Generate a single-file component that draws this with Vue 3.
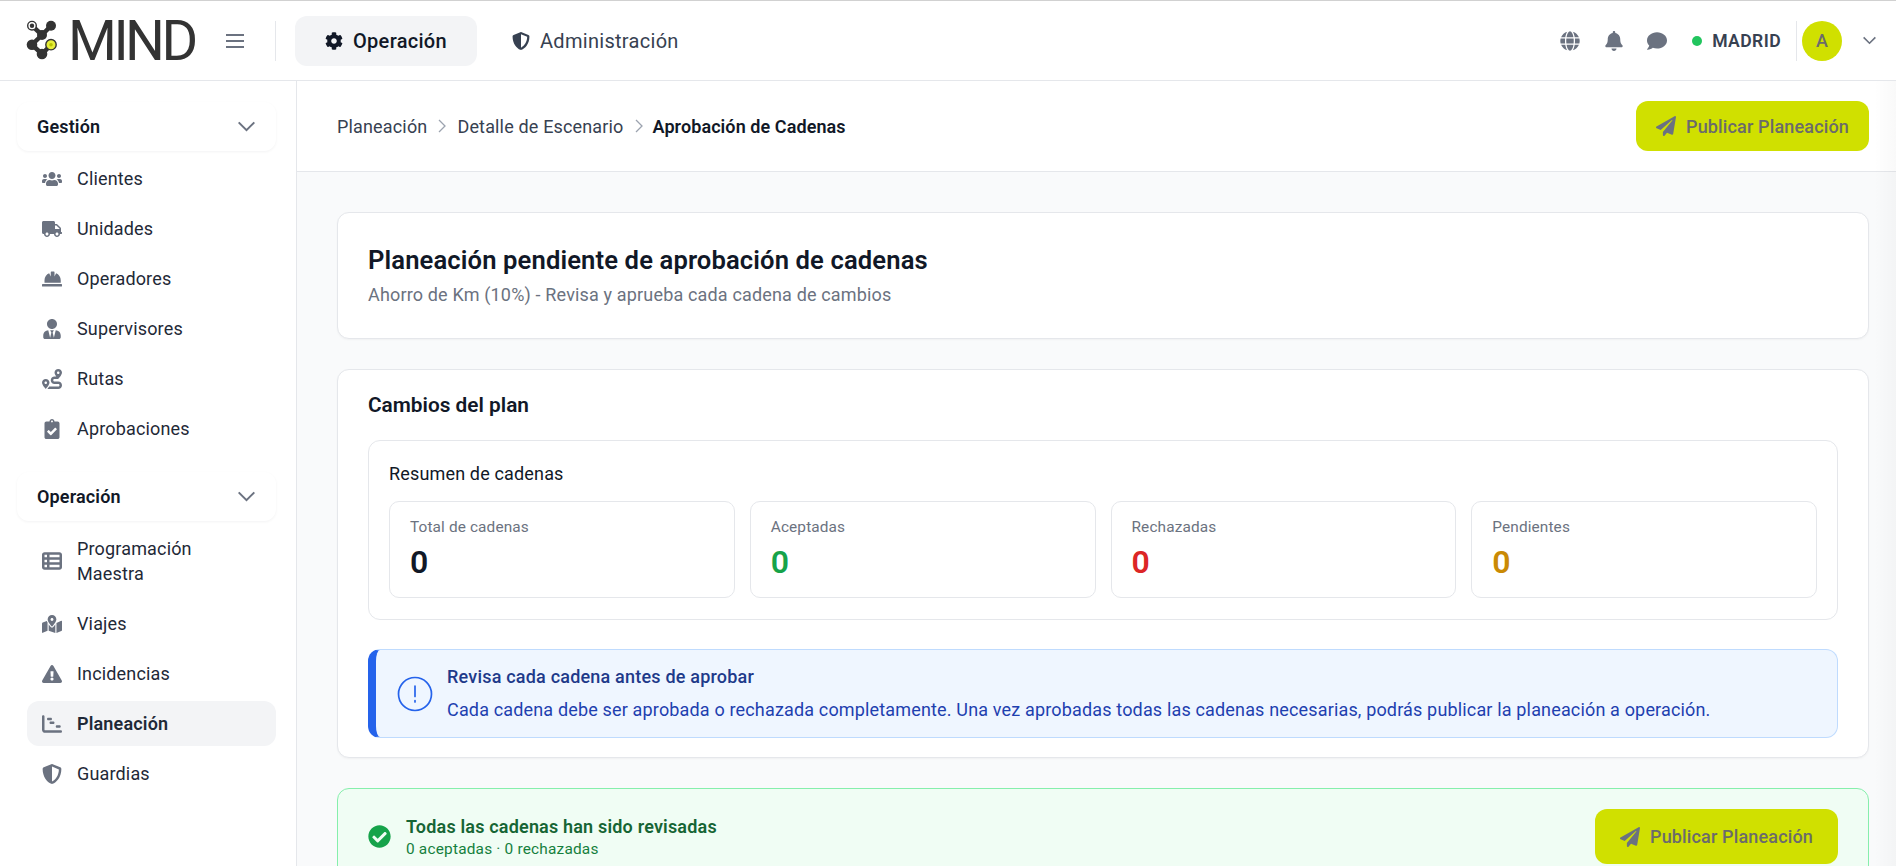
<script setup>
const icons = {
  cog: ['0 0 512 512', 'M487.4 315.7l-42.6-24.6c4.3-23.2 4.3-47 0-70.2l42.6-24.6c4.9-2.8 7.1-8.6 5.5-14-11.1-35.6-30-67.8-54.7-94.6-3.8-4.1-10-5.1-14.8-2.3L380.8 110c-17.9-15.4-38.5-27.3-60.8-35.1V25.8c0-5.6-3.9-10.5-9.4-11.7-36.7-8.2-74.3-7.8-109.2 0-5.5 1.2-9.4 6.1-9.4 11.7V75c-22.2 7.9-42.8 19.8-60.8 35.1L88.7 85.5c-4.9-2.8-11-1.9-14.8 2.3-24.7 26.7-43.6 58.9-54.7 94.6-1.7 5.4.6 11.2 5.5 14L67.3 221c-4.3 23.2-4.3 47 0 70.2l-42.6 24.6c-4.9 2.8-7.1 8.6-5.5 14 11.1 35.6 30 67.8 54.7 94.6 3.8 4.1 10 5.1 14.8 2.3l42.6-24.6c17.9 15.4 38.5 27.3 60.8 35.1v49.2c0 5.6 3.9 10.5 9.4 11.7 36.7 8.2 74.3 7.8 109.2 0 5.5-1.2 9.4-6.1 9.4-11.7v-49.2c22.2-7.9 42.8-19.8 60.8-35.1l42.6 24.6c4.9 2.8 11 1.9 14.8-2.3 24.7-26.7 43.6-58.9 54.7-94.6 1.5-5.5-.7-11.3-5.6-14.1zM256 336c-44.1 0-80-35.9-80-80s35.9-80 80-80 80 35.9 80 80-35.9 80-80 80z'],
  plane: ['0 0 512 512', 'M476 3.2L12.5 270.6c-18.1 10.4-15.8 35.6 2.2 43.2L121 358.4l287.3-253.2c5.5-4.9 13.3 2.6 8.6 8.3L176 407v80.5c0 23.6 28.5 32.9 42.5 15.8L282 426l124.6 52.2c14.2 6 30.4-2.9 33-18.2l72-432C515 7.8 493.3-6.8 476 3.2z'],
  bell: ['0 0 448 512', 'M224 512c35.32 0 63.97-28.65 63.97-64H160.03c0 35.35 28.65 64 63.97 64zm215.39-149.71c-19.32-20.76-55.47-51.99-55.47-154.29 0-77.7-54.48-139.9-127.94-155.16V32c0-17.67-14.32-32-31.98-32s-31.98 14.33-31.98 32v20.84C118.56 68.1 64.08 130.3 64.08 208c0 102.3-36.15 133.53-55.47 154.29-6 6.45-8.66 14.16-8.61 21.71.11 16.4 12.98 32 32.1 32h383.8c19.12 0 32-15.6 32.1-32 .05-7.55-2.61-15.27-8.61-21.71z'],
  comment: ['0 0 512 512', 'M256 32C114.6 32 0 125.1 0 240c0 49.6 21.4 95 57 130.7C44.5 421.1 2.7 466 2.2 466.5c-2.2 2.3-2.8 5.7-1.5 8.7S4.8 480 8 480c66.3 0 116-31.8 140.6-51.4 32.7 12.3 69 19.4 107.4 19.4 141.4 0 256-93.1 256-208S397.4 32 256 32z'],
  globe: ['0 0 496 512', 'M336.5 160C322 70.7 287.8 8 248 8s-74 62.7-88.5 152h177zM152 256c0 22.2 1.2 43.5 3.3 64h185.3c2.1-20.5 3.3-41.8 3.3-64s-1.2-43.5-3.3-64H155.3c-2.1 20.5-3.3 41.8-3.3 64zm324.7-96c-28.6-67.9-86.5-120.4-158-141.6 24.4 33.8 41.2 84.7 50 141.6h108zM177.2 18.4C105.8 39.6 47.8 92.1 19.3 160h108c8.7-56.9 25.5-107.8 49.9-141.6zM487.4 192H372.7c2.1 21 3.3 42.5 3.3 64s-1.2 43-3.3 64h114.6c5.5-20.5 8.6-41.8 8.6-64s-3.1-43.5-8.5-64zM120 256c0-21.5 1.2-43 3.3-64H8.6C3.2 212.5 0 233.8 0 256s3.2 43.5 8.6 64h114.6c-2-21-3.2-42.5-3.2-64zm39.5 96c14.5 89.3 48.7 152 88.5 152s74-62.7 88.5-152h-177zm159.3 141.6c71.4-21.2 129.4-73.7 158-141.6h-108c-8.8 56.9-25.6 107.8-50 141.6zM19.3 352c28.6 67.9 86.5 120.4 158 141.6-24.4-33.8-41.2-84.7-50-141.6h-108z'],
  shield: ['0 0 512 512', 'M466.5 83.7l-192-80a48.15 48.15 0 0 0-36.9 0l-192 80C27.7 91.1 16 108.6 16 128c0 198.5 114.5 335.7 221.5 380.3 11.8 4.9 25.1 4.9 36.9 0C360.1 472.6 496 349.3 496 128c0-19.4-11.7-36.9-29.5-44.3zM256.1 446.3l-.1-381 175.9 73.3c-3.3 151.4-82.1 261.1-175.8 307.7z'],
  users: ['0 0 640 512', 'M96 224c35.3 0 64-28.7 64-64s-28.7-64-64-64-64 28.7-64 64 28.7 64 64 64zm448 0c35.3 0 64-28.7 64-64s-28.7-64-64-64-64 28.7-64 64 28.7 64 64 64zm32 32h-64c-17.6 0-33.5 7.1-45.1 18.6 40.3 22.1 68.9 62 75.1 109.4h66c17.7 0 32-14.3 32-32v-32c0-35.3-28.7-64-64-64zm-256 0c61.9 0 112-50.1 112-112S381.9 32 320 32 208 82.1 208 144s50.1 112 112 112zm76.8 32h-8.3c-20.8 10-43.9 16-68.5 16s-47.6-6-68.5-16h-8.3C179.6 288 128 339.6 128 403.2V432c0 26.5 21.5 48 48 48h288c26.5 0 48-21.5 48-48v-28.8c0-63.6-51.6-115.2-115.2-115.2zm-223.7-13.4C161.5 263.1 145.6 256 128 256H64c-35.3 0-64 28.7-64 64v32c0 17.7 14.3 32 32 32h65.9c6.3-47.4 34.9-87.3 75.2-109.4z'],
  truck: ['0 0 640 512', 'M624 352h-16V243.9c0-12.7-5.1-24.9-14.1-33.9L494 110.1c-9-9-21.2-14.1-33.9-14.1H416V48c0-26.5-21.5-48-48-48H48C21.5 0 0 21.5 0 48v320c0 26.5 21.5 48 48 48h16c0 53 43 96 96 96s96-43 96-96h128c0 53 43 96 96 96s96-43 96-96h48c8.8 0 16-7.2 16-16v-32c0-8.8-7.2-16-16-16zM160 464c-26.5 0-48-21.5-48-48s21.5-48 48-48 48 21.5 48 48-21.5 48-48 48zm320 0c-26.5 0-48-21.5-48-48s21.5-48 48-48 48 21.5 48 48-21.5 48-48 48zm80-208H416V144h44.1l99.9 99.9V256z'],
  hat: ['0 0 512 512', 'M480 288c0-80.25-49.28-148.92-119.19-177.62L320 192V80a16 16 0 0 0-16-16h-64a16 16 0 0 0-16 16v112l-40.81-81.62C113.28 139.08 64 207.75 64 288v64h416zm16 96H16a16 16 0 0 0-16 16v32a16 16 0 0 0 16 16h480a16 16 0 0 0 16-16v-32a16 16 0 0 0-16-16z'],
  tie: ['0 0 448 512', 'M224 256c70.7 0 128-57.3 128-128S294.7 0 224 0 96 57.3 96 128s57.3 128 128 128zm95.8 32.6L272 480l-32-136 32-56h-96l32 56-32 136-47.8-191.4C56.9 292 0 350.3 0 422.4V464c0 26.5 21.5 48 48 48h352c26.5 0 48-21.5 48-48v-41.6c0-72.1-56.9-130.4-128.2-133.8z'],
  route: ['0 0 512 512', 'M416 320h-96c-17.6 0-32-14.4-32-32s14.4-32 32-32h96s96-107 96-160-43-96-96-96-96 43-96 96c0 25.5 22.2 63.4 45.3 96H320c-52.9 0-96 43.1-96 96s43.1 96 96 96h96c17.6 0 32 14.4 32 32s-14.4 32-32 32H185.5c-16 24.8-33.8 47.7-47.3 64H416c52.9 0 96-43.1 96-96s-43.1-96-96-96zm0-256c17.7 0 32 14.3 32 32s-14.3 32-32 32-32-14.3-32-32 14.3-32 32-32zM96 256c-53 0-96 43-96 96s96 160 96 160 96-107 96-160-43-96-96-96zm0 128c-17.7 0-32-14.3-32-32s14.3-32 32-32 32 14.3 32 32-14.3 32-32 32z'],
  clip: ['0 0 384 512', 'M336 64h-80c0-35.3-28.7-64-64-64s-64 28.7-64 64H48C21.5 64 0 85.5 0 112v352c0 26.5 21.5 48 48 48h288c26.5 0 48-21.5 48-48V112c0-26.5-21.5-48-48-48zM192 40c13.3 0 24 10.7 24 24s-10.7 24-24 24-24-10.7-24-24 10.7-24 24-24zm121.2 231.8l-143 141.8c-4.7 4.7-12.3 4.6-17-.1l-82.6-83.3c-4.7-4.7-4.6-12.3.1-17L99.1 285c4.7-4.7 12.3-4.6 17 .1l46 46.4 106-105.2c4.7-4.7 12.3-4.6 17 .1l28.2 28.4c4.7 4.8 4.6 12.3-.1 17z'],
  table: ['0 0 512 512', 'M0 96C0 60.7 28.7 32 64 32H448c35.3 0 64 28.7 64 64V416c0 35.3-28.7 64-64 64H64c-35.3 0-64-28.7-64-64V96zm64 0v64h64V96H64zm384 0H192v64H448V96zM64 224v64h64V224H64zm384 0H192v64H448V224zM64 352v64h64V352H64zm384 0H192v64H448V352z'],
  map: ['0 0 576 512', 'M288 0c-69.59 0-126 56.41-126 126 0 56.26 82.35 158.8 113.9 196.02 6.39 7.54 17.82 7.54 24.2 0C331.65 284.8 414 182.26 414 126 414 56.41 357.59 0 288 0zm0 168c-23.2 0-42-18.8-42-42s18.8-42 42-42 42 18.8 42 42-18.8 42-42 42zM20.12 215.95A32.006 32.006 0 0 0 0 245.66v250.32c0 11.32 11.43 19.06 21.94 14.86L160 448V214.92c-8.84-15.98-16.07-31.54-21.25-46.42L20.12 215.95zM288 359.67c-14.07 0-27.38-6.18-36.51-16.96-19.66-23.2-40.57-49.62-59.49-76.72V448l192 64V266c-18.92 27.09-39.82 53.52-59.49 76.72-9.13 10.77-22.44 16.95-36.51 16.95zm266.06-198.51L416 224v288l139.88-55.95A31.996 31.996 0 0 0 576 426.34V176.02c0-11.32-11.43-19.06-21.94-14.86z'],
  warn: ['0 0 576 512', 'M569.517 440.013C587.975 472.007 564.806 512 527.94 512H48.054c-36.937 0-59.999-40.055-41.577-71.987L246.423 23.985c18.467-32.009 64.72-31.951 83.154 0l239.94 416.028zM288 354c-25.405 0-46 20.595-46 46s20.595 46 46 46 46-20.595 46-46-20.595-46-46-46zm-43.673-165.346l7.418 136c.347 6.364 5.609 11.346 11.982 11.346h48.546c6.373 0 11.635-4.982 11.982-11.346l7.418-136c.375-6.874-5.098-12.654-11.982-12.654h-63.383c-6.884 0-12.356 5.78-11.981 12.654z'],
  gantt: ['0 0 512 512', 'M32 32c17.7 0 32 14.3 32 32V400c0 8.8 7.2 16 16 16H480c17.7 0 32 14.3 32 32s-14.3 32-32 32H80c-44.2 0-80-35.8-80-80V64C0 46.3 14.3 32 32 32zm96 96c0-17.7 14.3-32 32-32l64 0c17.7 0 32 14.3 32 32s-14.3 32-32 32H160c-17.7 0-32-14.3-32-32zm96 64H288c17.7 0 32 14.3 32 32s-14.3 32-32 32H224c-17.7 0-32-14.3-32-32s14.3-32 32-32zm160 96h64c17.7 0 32 14.3 32 32s-14.3 32-32 32H384c-17.7 0-32-14.3-32-32s14.3-32 32-32z'],
  check: ['0 0 512 512', 'M504 256c0 136.967-111.033 248-248 248S8 392.967 8 256 119.033 8 256 8s248 111.033 248 248zM227.314 387.314l184-184c6.248-6.248 6.248-16.379 0-22.627l-22.627-22.627c-6.248-6.249-16.379-6.249-22.628 0L216 308.118l-70.059-70.059c-6.248-6.248-16.379-6.248-22.628 0l-22.627 22.627c-6.248 6.248-6.248 16.379 0 22.627l104 104c6.249 6.249 16.379 6.249 22.628.001z']
}

const groups = [
  {
    title: 'Gestión',
    items: [
      { label: 'Clientes', icon: 'users' },
      { label: 'Unidades', icon: 'truck' },
      { label: 'Operadores', icon: 'hat' },
      { label: 'Supervisores', icon: 'tie' },
      { label: 'Rutas', icon: 'route' },
      { label: 'Aprobaciones', icon: 'clip' }
    ]
  },
  {
    title: 'Operación',
    items: [
      { label: 'Programación Maestra', icon: 'table' },
      { label: 'Viajes', icon: 'map' },
      { label: 'Incidencias', icon: 'warn' },
      { label: 'Planeación', icon: 'gantt', active: true },
      { label: 'Guardias', icon: 'shield' }
    ]
  }
]

const stats = [
  { label: 'Total de cadenas', value: 0, tone: 'dark' },
  { label: 'Aceptadas', value: 0, tone: 'green' },
  { label: 'Rechazadas', value: 0, tone: 'red' },
  { label: 'Pendientes', value: 0, tone: 'amber' }
]
</script>

<template>
  <div class="app">
    <header class="topbar">
      <div class="logo">
        <svg class="logo-mark" viewBox="0 0 34 44" width="34" height="44" aria-hidden="true">
          <g stroke="#333" stroke-width="4.500" fill="none">
            <path d="M6 6.700L16 16M25 6.700L16 16L6 25.700L16 35L25 25.700" />
          </g>
          <circle cx="6" cy="6.700" r="4.300" fill="#fff" stroke="#333" stroke-width="1.400" />
          <circle cx="6" cy="6.700" r="2.200" fill="#333" />
          <circle cx="25" cy="6.700" r="5" fill="#333" />
          <circle cx="16" cy="16" r="5" fill="#333" />
          <circle cx="6" cy="25.700" r="5.300" fill="#333" />
          <circle cx="16" cy="35" r="5.300" fill="#333" />
          <circle cx="25" cy="25.700" r="5.200" fill="#e6ee3a" stroke="#333" stroke-width="1.400" />
          <circle cx="25" cy="25.700" r="1.800" fill="#b8c400" />
        </svg>
        <span class="logo-text">MIND</span>
      </div>
      <button class="burger" aria-label="Menú"><span></span><span></span><span></span></button>
      <div class="vrule"></div>
      <nav class="tabs">
        <a class="tab tab-active">
          <svg class="i18" :viewBox="icons.cog[0]"><path :d="icons.cog[1]" /></svg>
          Operación
        </a>
        <a class="tab">
          <svg class="i18" :viewBox="icons.shield[0]"><path :d="icons.shield[1]" /></svg>
          Administración
        </a>
      </nav>
      <div class="top-right">
        <svg class="ti globe" :viewBox="icons.globe[0]"><path :d="icons.globe[1]" /></svg>
        <svg class="ti bell" :viewBox="icons.bell[0]"><path :d="icons.bell[1]" /></svg>
        <svg class="ti comment" :viewBox="icons.comment[0]"><path :d="icons.comment[1]" /></svg>
        <span class="dot"></span>
        <span class="city">MADRID</span>
        <div class="vrule small"></div>
        <span class="avatar">A</span>
        <svg class="caret" viewBox="0 0 16 10" width="15" height="9"><path d="M1.500 1.500L8 8l6.500-6.500" fill="none" stroke="#6b7280" stroke-width="1.800" /></svg>
      </div>
    </header>

    <div class="body">
      <aside class="side">
        <section v-for="g in groups" :key="g.title" class="group">
          <div class="group-head">
            <span>{{ g.title }}</span>
            <svg viewBox="0 0 20 12" width="19" height="11"><path d="M1.500 1.500L10 10l8.500-8.500" fill="none" stroke="#6b7280" stroke-width="2.200" /></svg>
          </div>
          <a v-for="it in g.items" :key="it.label" class="item" :class="{ active: it.active }">
            <span class="item-ico">
              <svg :viewBox="icons[it.icon][0]"><path :d="icons[it.icon][1]" /></svg>
            </span>
            <span class="item-label">{{ it.label }}</span>
          </a>
        </section>
      </aside>

      <main class="main">
        <div class="crumbbar">
          <div class="crumbs">
            <span>Planeación</span>
            <svg class="sep" viewBox="0 0 8 14" width="8" height="14"><path d="M1 1l6 6-6 6" fill="none" stroke="#9ca3af" stroke-width="1.300" /></svg>
            <span>Detalle de Escenario</span>
            <svg class="sep" viewBox="0 0 8 14" width="8" height="14"><path d="M1 1l6 6-6 6" fill="none" stroke="#9ca3af" stroke-width="1.300" /></svg>
            <strong>Aprobación de Cadenas</strong>
          </div>
          <button class="publish">
            <svg :viewBox="icons.plane[0]"><path :d="icons.plane[1]" /></svg>
            Publicar Planeación
          </button>
        </div>

        <div class="content">
          <section class="card head-card">
            <h1>Planeación pendiente de aprobación de cadenas</h1>
            <p>Ahorro de Km (10%) - Revisa y aprueba cada cadena de cambios</p>
          </section>

          <section class="card plan-card">
            <h2>Cambios del plan</h2>
            <div class="summary">
              <h3>Resumen de cadenas</h3>
              <div class="stats">
                <div v-for="s in stats" :key="s.label" class="stat">
                  <span class="stat-label">{{ s.label }}</span>
                  <span class="stat-value" :class="s.tone">{{ s.value }}</span>
                </div>
              </div>
            </div>
            <div class="alert">
              <svg class="alert-ico" viewBox="0 0 36 36" width="36" height="36">
                <circle cx="18" cy="18" r="16.500" fill="none" stroke="#2563eb" stroke-width="1.700" />
                <path d="M18 10v10.500M18 24.500v1.500" stroke="#2563eb" stroke-width="1.700" stroke-linecap="round" />
              </svg>
              <div>
                <div class="alert-title">Revisa cada cadena antes de aprobar</div>
                <div class="alert-text">Cada cadena debe ser aprobada o rechazada completamente. Una vez aprobadas todas las cadenas necesarias, podrás publicar la planeación a operación.</div>
              </div>
            </div>
          </section>

          <section class="done">
            <div class="done-left">
              <svg class="done-ico" :viewBox="icons.check[0]"><path :d="icons.check[1]" /></svg>
              <div>
                <div class="done-title">Todas las cadenas han sido revisadas</div>
                <div class="done-sub">0 aceptadas · 0 rechazadas</div>
              </div>
            </div>
            <button class="publish big">
              <svg :viewBox="icons.plane[0]"><path :d="icons.plane[1]" /></svg>
              Publicar Planeación
            </button>
          </section>
        </div>
        <div class="edge"></div>
      </main>
    </div>
  </div>
</template>

<style scoped>
.app {
  width: 1896px;
  height: 866px;
  overflow: hidden;
  display: flex;
  flex-direction: column;
  font-family: Roboto, "Liberation Sans", sans-serif;
  color: #111827;
  background: #fff;
}
.topbar {
  flex: none;
  height: 81px;
  box-sizing: border-box;
  border-top: 1px solid #d1d1d1;
  border-bottom: 1px solid #e5e7eb;
  display: flex;
  align-items: center;
  padding-left: 26px;
}
.logo {
  display: flex;
  align-items: center;
  width: 170px;
  gap: 8px;
}
.logo-mark { flex: none; }
.logo-text {
  font-size: 56px;
  line-height: 1;
  font-weight: 400;
  letter-spacing: -3.500px;
  color: #333;
}
.burger {
  margin-left: 30px;
  width: 18px;
  padding: 0;
  border: 0;
  background: none;
  display: flex;
  flex-direction: column;
  gap: 4px;
}
.burger span {
  height: 2px;
  background: #6b7280;
}
.vrule {
  width: 1px;
  height: 40px;
  background: #e5e7eb;
  margin-left: 31px;
}
.tabs {
  display: flex;
  gap: 5px;
  margin-left: 19px;
}
.tab {
  height: 50px;
  display: flex;
  align-items: center;
  gap: 10px;
  padding: 0 30px;
  border-radius: 12px;
  font-size: 20px;
  letter-spacing: 0.3px;
  color: #374151;
}
.tab-active {
  background: #f3f4f6;
  color: #111827;
  font-weight: 500;
}
.i18 {
  width: 18px;
  height: 18px;
  fill: currentColor;
}
.top-right {
  margin-left: auto;
  display: flex;
  align-items: center;
  height: 100%;
  padding-right: 19px;
}
.ti {
  height: 20px;
  width: 20px;
  fill: #6b7280;
}
.bell { margin-left: 24px; }
.comment { margin-left: 23px; }
.dot {
  width: 10px;
  height: 10px;
  border-radius: 50%;
  background: #22c55e;
  margin-left: 25px;
}
.city {
  margin-left: 10px;
  font-size: 17.6px;
  font-weight: 600;
  letter-spacing: 0.4px;
  color: #374151;
}
.vrule.small { margin-left: 15px; }
.avatar {
  margin-left: 5px;
  width: 40px;
  height: 40px;
  border-radius: 50%;
  background: #d0e000;
  color: #6b6b6b;
  font-size: 18px;
  font-weight: 500;
  display: flex;
  align-items: center;
  justify-content: center;
}
.caret { margin-left: 20px; }
.body {
  flex: 1;
  display: flex;
  min-height: 0;
}
.side {
  flex: none;
  width: 297px;
  box-sizing: border-box;
  border-right: 1px solid #e5e7eb;
  padding: 21px 20px 0 17px;
}
.group + .group { margin-top: 21px; }
.group-head {
  height: 49px;
  box-sizing: border-box;
  padding: 0 20px 0 20px;
  border-radius: 12px;
  display: flex;
  align-items: center;
  justify-content: space-between;
  font-size: 18px;
  letter-spacing: 0.15px;
  font-weight: 600;
  box-shadow: 0 1px 3px rgba(17, 24, 39, 0.05);
  margin-bottom: 5px;
}
.item {
  display: flex;
  align-items: center;
  gap: 15px;
  margin: 0 0 5px 10px;
  padding: 10px 25px 10px 15px;
  border-radius: 12px;
  font-size: 18px;
  line-height: 25px;
  letter-spacing: 0.16px;
  color: #1f2937;
}
.item-ico {
  flex: none;
  width: 20px;
  height: 20px;
  display: flex;
  justify-content: center;
  align-items: center;
}
.item-ico svg {
  width: 20px;
  height: 20px;
  fill: #6b7280;
}
.item.active {
  background: #f3f4f6;
  font-weight: 600;
}
.main {
  flex: 1;
  min-width: 0;
  position: relative;
  background: #f9fafb;
}
.edge {
  position: absolute;
  top: 0;
  right: 0;
  bottom: 0;
  width: 22px;
  background: linear-gradient(90deg, rgba(0, 0, 0, 0), rgba(0, 0, 0, 0.022));
  pointer-events: none;
}
.crumbbar {
  height: 91px;
  box-sizing: border-box;
  background: #fff;
  border-bottom: 1px solid #e5e7eb;
  padding: 0 27px 0 40px;
  display: flex;
  align-items: center;
  justify-content: space-between;
}
.crumbs {
  display: flex;
  align-items: center;
  gap: 11px;
  font-size: 18px;
  letter-spacing: 0.16px;
  color: #374151;
}
.crumbs strong {
  color: #111827;
  font-weight: 600;
  letter-spacing: 0.08px;
  margin-left: -1px;
}
.publish {
  width: 233px;
  height: 50px;
  border: 0;
  border-radius: 12px;
  background: #d0e000;
  color: #6b6b6b;
  font-family: inherit;
  font-size: 18px;
  letter-spacing: 0.15px;
  font-weight: 500;
  display: flex;
  align-items: center;
  justify-content: center;
  gap: 10px;
}
.publish svg {
  width: 20px;
  height: 20px;
  fill: #6b7280;
}
.publish.big {
  width: 243px;
  height: 55px;
}
.content {
  padding: 40px 27px 0 40px;
  display: flex;
  flex-direction: column;
  gap: 30px;
}
.card {
  background: #fff;
  border: 1px solid #e5e7eb;
  border-radius: 12px;
  box-shadow: 0 1px 2px rgba(0, 0, 0, 0.04);
  box-sizing: border-box;
  padding: 0 30px;
}
.head-card {
  height: 127px;
  display: flex;
  flex-direction: column;
  justify-content: center;
}
h1 {
  margin: 0;
  font-size: 25.6px;
  line-height: 32px;
  letter-spacing: 0.12px;
  font-weight: 600;
}
.head-card p {
  margin: 6px 0 0;
  font-size: 18px;
  line-height: 26px;
  letter-spacing: 0.16px;
  color: #6b7280;
}
.plan-card {
  height: 389px;
  padding-top: 20px;
}
h2 {
  margin: 0;
  font-size: 20.8px;
  line-height: 30px;
  font-weight: 600;
}
.summary {
  margin-top: 20px;
  height: 180px;
  box-sizing: border-box;
  border: 1px solid #e5e7eb;
  border-radius: 12px;
  padding: 20px;
}
h3 {
  margin: 0;
  font-size: 18px;
  line-height: 26px;
  letter-spacing: 0.16px;
  font-weight: 400;
  color: #111827;
}
.stats {
  margin-top: 14px;
  display: grid;
  grid-template-columns: repeat(4, 1fr);
  gap: 15px;
}
.stat {
  height: 97px;
  box-sizing: border-box;
  border: 1px solid #e5e7eb;
  border-radius: 10px;
  padding: 14px 20px;
  display: flex;
  flex-direction: column;
}
.stat-label {
  font-size: 15.4px;
  letter-spacing: 0.12px;
  line-height: 22px;
  color: #6b7280;
}
.stat-value {
  margin-top: 4px;
  font-size: 32px;
  line-height: 40px;
  font-weight: 600;
}
.dark { color: #111827; }
.green { color: #16a34a; }
.red { color: #dc2626; }
.amber { color: #ca8a04; }
.alert {
  margin-top: 29px;
  height: 89px;
  box-sizing: border-box;
  background: #eff6ff;
  border: 1px solid #bfdbfe;
  border-left: 8px solid #2563eb;
  border-radius: 12px;
  display: flex;
  align-items: center;
  gap: 14px;
  padding-left: 21px;
}
.alert-ico { flex: none; }
.alert-title {
  font-size: 18px;
  line-height: 26px;
  letter-spacing: 0.2px;
  font-weight: 500;
  color: #1e3a8a;
}
.alert-text {
  margin-top: 7px;
  font-size: 18px;
  line-height: 26px;
  letter-spacing: 0.16px;
  color: #1e40af;
}
.done {
  height: 100px;
  box-sizing: border-box;
  background: #f0fdf4;
  border: 1px solid #86efac;
  border-radius: 12px;
  padding: 20px 30px;
  display: flex;
  justify-content: space-between;
  align-items: flex-start;
}
.done-left {
  display: flex;
  align-items: center;
  gap: 15px;
  height: 55px;
}
.done-ico {
  width: 23px;
  height: 23px;
  fill: #16a34a;
}
.done-title {
  font-size: 18px;
  line-height: 26px;
  letter-spacing: 0.18px;
  font-weight: 600;
  color: #166534;
}
.done-sub {
  margin-top: -1px;
  font-size: 15.4px;
  line-height: 20px;
  letter-spacing: 0.2px;
  color: #15803d;
}
</style>
